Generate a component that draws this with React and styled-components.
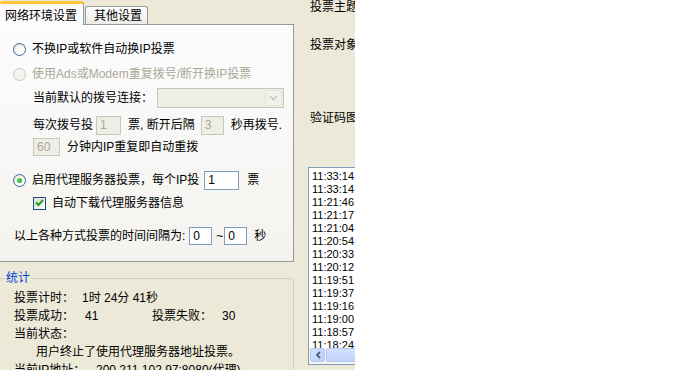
import React from "react";
import styled, { createGlobalStyle } from "styled-components";

const FONT = `"Liberation Sans", "Noto Sans CJK SC", sans-serif`;

const Global = createGlobalStyle`
  html, body { margin: 0; padding: 0; background: #fff; }
  body { font-family: ${FONT}; font-size: 12px; }
`;

const Dialog = styled.div`
  width: 355px;
  height: 370px;
  background: #ece9d8;
  overflow: hidden;
  display: flex;
  color: #000;
  font-family: ${FONT};
  font-size: 12px;
  line-height: 14px;
`;

const LeftCol = styled.div`
  width: 294px;
  flex: none;
  display: flex;
  flex-direction: column;
`;

const TabStrip = styled.div`
  flex: none;
  height: 24px;
  display: flex;
  align-items: flex-end;
  gap: 1px;
  position: relative;
  z-index: 1;
`;

const Tab = styled.div`
  box-sizing: border-box;
  display: flex;
  align-items: center;
  border: 1px solid #919b9c;
  border-bottom: none;
  border-radius: 3px 3px 0 0;
  ${(p) =>
    p.$active
      ? `
    width: 84px;
    height: 24px;
    margin-bottom: -1px;
    padding: 2px 0 0 5px;
    background: #fcfcfe;
    border-left: none;
    border-top: 3px solid #ffc83c;
    box-shadow: inset 0 -1px 0 #fcfcfe;
  `
      : `
    width: 63px;
    height: 18px;
    padding: 1px 0 0 8px;
    background: linear-gradient(#ffffff, #ecebe6);
  `}
`;

const Panel = styled.div`
  box-sizing: border-box;
  flex: none;
  height: 238px;
  border: 1px solid #919b9c;
  border-left: none;
  background: linear-gradient(#fcfcfe, #f4f3ee);
  padding: 14px 0 0 13px;
  display: flex;
  flex-direction: column;
`;

const Row = styled.div`
  flex: none;
  height: 20px;
  margin-top: ${(p) => p.$mt || 0}px;
  padding-left: ${(p) => p.$indent || 0}px;
  display: flex;
  align-items: center;
  white-space: nowrap;
  color: ${(p) => (p.$disabled ? "#aca899" : "#000")};
`;

const Radio = styled.span`
  box-sizing: border-box;
  flex: none;
  width: 13px;
  height: 13px;
  border-radius: 50%;
  border: 1px solid ${(p) => (p.$disabled ? "#cac8bb" : "#3d6a96")};
  background: ${(p) =>
    p.$disabled
      ? "#f4f3ee"
      : "radial-gradient(circle at 65% 65%, #ffffff 30%, #dcd9cd 100%)"};
  margin-right: 6px;
  display: flex;
  align-items: center;
  justify-content: center;
  &::after {
    content: "";
    display: ${(p) => (p.$checked ? "block" : "none")};
    width: 5px;
    height: 5px;
    border-radius: 50%;
    background: radial-gradient(circle at 40% 40%, #55d655, #21a121);
  }
`;

const Check = styled.span`
  box-sizing: border-box;
  flex: none;
  width: 13px;
  height: 13px;
  border: 1px solid #1c5180;
  background: linear-gradient(135deg, #dcdcd7, #ffffff);
  margin-right: 6px;
  display: flex;
  align-items: center;
  justify-content: center;
`;

const Field = styled.span`
  box-sizing: border-box;
  flex: none;
  display: flex;
  align-items: center;
  width: ${(p) => p.$w}px;
  height: ${(p) => p.$h || 19}px;
  margin: 0 ${(p) => p.$mr || 0}px 0 ${(p) => p.$ml || 0}px;
  padding-left: 3px;
  border: 1px solid ${(p) => (p.$disabled ? "#c9c7ba" : "#7f9db9")};
  background: ${(p) => (p.$disabled ? "#efeee6" : "#fff")};
  color: ${(p) => (p.$disabled ? "#aca899" : "#000")};
`;

const Combo = styled.span`
  box-sizing: border-box;
  width: 127px;
  height: 20px;
  margin-left: 4px;
  border: 1px solid #c9c7ba;
  background: #efeee6;
  display: flex;
  justify-content: flex-end;
  padding: 1px;
`;

const ComboButton = styled.span`
  box-sizing: border-box;
  width: 17px;
  height: 16px;
  border: 1px solid #e6e4d8;
  border-radius: 2px;
  background: #f3f2ea;
  display: flex;
  align-items: center;
  justify-content: center;
`;

const Group = styled.fieldset`
  flex: none;
  margin: 9px 0 0 0;
  padding: 0;
  border: 1px solid #d0d0bf;
  border-left: none;
  border-radius: 0 4px 4px 0;
  height: 120px;
`;

const Legend = styled.legend`
  margin-left: 5px;
  padding: 0 1px;
  color: #0046d5;
  line-height: 14px;
`;

const StatBody = styled.div`
  padding: 4px 0 0 14px;
  display: flex;
  flex-direction: column;
`;

const StatRow = styled.div`
  flex: none;
  height: 18px;
  display: flex;
  align-items: center;
  white-space: nowrap;
  padding-left: ${(p) => p.$indent || 0}px;
`;

const StatLabel = styled.span`
  flex: none;
  width: ${(p) => p.$w}px;
`;

const RightCol = styled.div`
  margin-left: 14px;
  width: 140px;
  flex: none;
  display: flex;
  flex-direction: column;
`;

const SideLabel = styled.div`
  flex: none;
  padding-left: 2px;
  margin-top: ${(p) => p.$mt || 0}px;
  white-space: nowrap;
  line-height: 14px;
`;

const ListBox = styled.div`
  box-sizing: border-box;
  flex: none;
  margin-top: 42px;
  height: 198px;
  border: 1px solid #7f9db9;
  background: #fff;
  display: flex;
  flex-direction: column;
`;

const ListItems = styled.div`
  flex: 1;
  overflow: hidden;
  padding: 2px 0 0 3px;
  font-family: "Liberation Sans", Arial, sans-serif;
  font-size: 11px;
`;

const ListItem = styled.div`
  height: 13px;
  line-height: 13px;
`;

const HScroll = styled.div`
  height: 15px;
  flex: none;
  display: flex;
  background: #f7f6ee;
  padding: 0 0 1px 1px;
  gap: 1px;
`;

const ScrollBtn = styled.span`
  box-sizing: border-box;
  width: 15px;
  height: 14px;
  border: 1px solid #b4c8f6;
  border-radius: 2px;
  background: linear-gradient(135deg, #d7e3fe, #bacdfa);
  display: flex;
  align-items: center;
  justify-content: center;
`;

const ScrollThumb = styled.span`
  flex: 1;
  height: 14px;
  box-sizing: border-box;
  border: 1px solid #b4c8f6;
  border-radius: 2px;
  background: linear-gradient(#d4e0fe, #c1d3fb);
`;

const times = [
  "11:33:14",
  "11:33:14",
  "11:21:46",
  "11:21:17",
  "11:21:04",
  "11:20:54",
  "11:20:33",
  "11:20:12",
  "11:19:51",
  "11:19:37",
  "11:19:16",
  "11:19:00",
  "11:18:57",
  "11:18:24",
];

export default function App() {
  return (
    <>
      <Global />
      <Dialog>
        <LeftCol>
          <TabStrip>
            <Tab $active>网络环境设置</Tab>
            <Tab>其他设置</Tab>
          </TabStrip>
          <Panel>
            <Row>
              <Radio />
              不换IP或软件自动换IP投票
            </Row>
            <Row $mt={5} $disabled>
              <Radio $disabled />
              使用Ads或Modem重复拨号/断开换IP投票
            </Row>
            <Row $mt={4} $indent={20}>
              当前默认的拨号连接：
              <Combo>
                <ComboButton>
                  <svg width="9" height="6" viewBox="0 0 9 6">
                    <path d="M1 1 L4.5 4.5 L8 1" fill="none" stroke="#c9c7ba" strokeWidth="1.6" />
                  </svg>
                </ComboButton>
              </Combo>
            </Row>
            <Row $mt={7} $indent={20}>
              每次拨号投
              <Field $disabled $w={25} $ml={3} $mr={7}>1</Field>
              票, 断开后隔
              <Field $disabled $w={23} $ml={6} $mr={7}>3</Field>
              秒再拨号.
            </Row>
            <Row $mt={2} $indent={20}>
              <Field $disabled $w={27} $h={18} $mr={7}>60</Field>
              分钟内IP重复即自动重拨
            </Row>
            <Row $mt={13}>
              <Radio $checked />
              启用代理服务器投票，每个IP投
              <Field $w={35} $ml={5} $mr={8}>1</Field>
              票
            </Row>
            <Row $mt={3} $indent={20}>
              <Check>
                <svg width="9" height="8" viewBox="0 0 9 8">
                  <path d="M1 3.5 L3.5 6 L8 1" fill="none" stroke="#21a121" strokeWidth="2" />
                </svg>
              </Check>
              自动下载代理服务器信息
            </Row>
            <Row $mt={13} $indent={1}>
              以上各种方式投票的时间间隔为:
              <Field $w={23} $h={18} $ml={4} $mr={4}>0</Field>
              ~
              <Field $w={23} $h={18} $ml={1} $mr={7}>0</Field>
              秒
            </Row>
          </Panel>
          <Group>
            <Legend>统计</Legend>
            <StatBody>
              <StatRow>
                <StatLabel $w={68}>投票计时：</StatLabel>
                1时 24分 41秒
              </StatRow>
              <StatRow>
                <StatLabel $w={71}>投票成功：</StatLabel>
                <StatLabel $w={67}>41</StatLabel>
                <StatLabel $w={70}>投票失败：</StatLabel>
                30
              </StatRow>
              <StatRow>当前状态：</StatRow>
              <StatRow $indent={22}>用户终止了使用代理服务器地址投票。</StatRow>
              <StatRow>
                <StatLabel $w={82}>当前IP地址：</StatLabel>
                200.211.102.97:8080(代理)
              </StatRow>
            </StatBody>
          </Group>
        </LeftCol>
        <RightCol>
          <SideLabel>投票主题</SideLabel>
          <SideLabel $mt={24}>投票对象</SideLabel>
          <SideLabel $mt={59}>验证码图</SideLabel>
          <ListBox>
            <ListItems>
              {times.map((t, i) => (
                <ListItem key={i}>{t}</ListItem>
              ))}
            </ListItems>
            <HScroll>
              <ScrollBtn>
                <svg width="6" height="8" viewBox="0 0 6 8">
                  <path d="M5 1 L2 4 L5 7" fill="none" stroke="#4d6185" strokeWidth="1.8" />
                </svg>
              </ScrollBtn>
              <ScrollThumb />
            </HScroll>
          </ListBox>
        </RightCol>
      </Dialog>
    </>
  );
}
